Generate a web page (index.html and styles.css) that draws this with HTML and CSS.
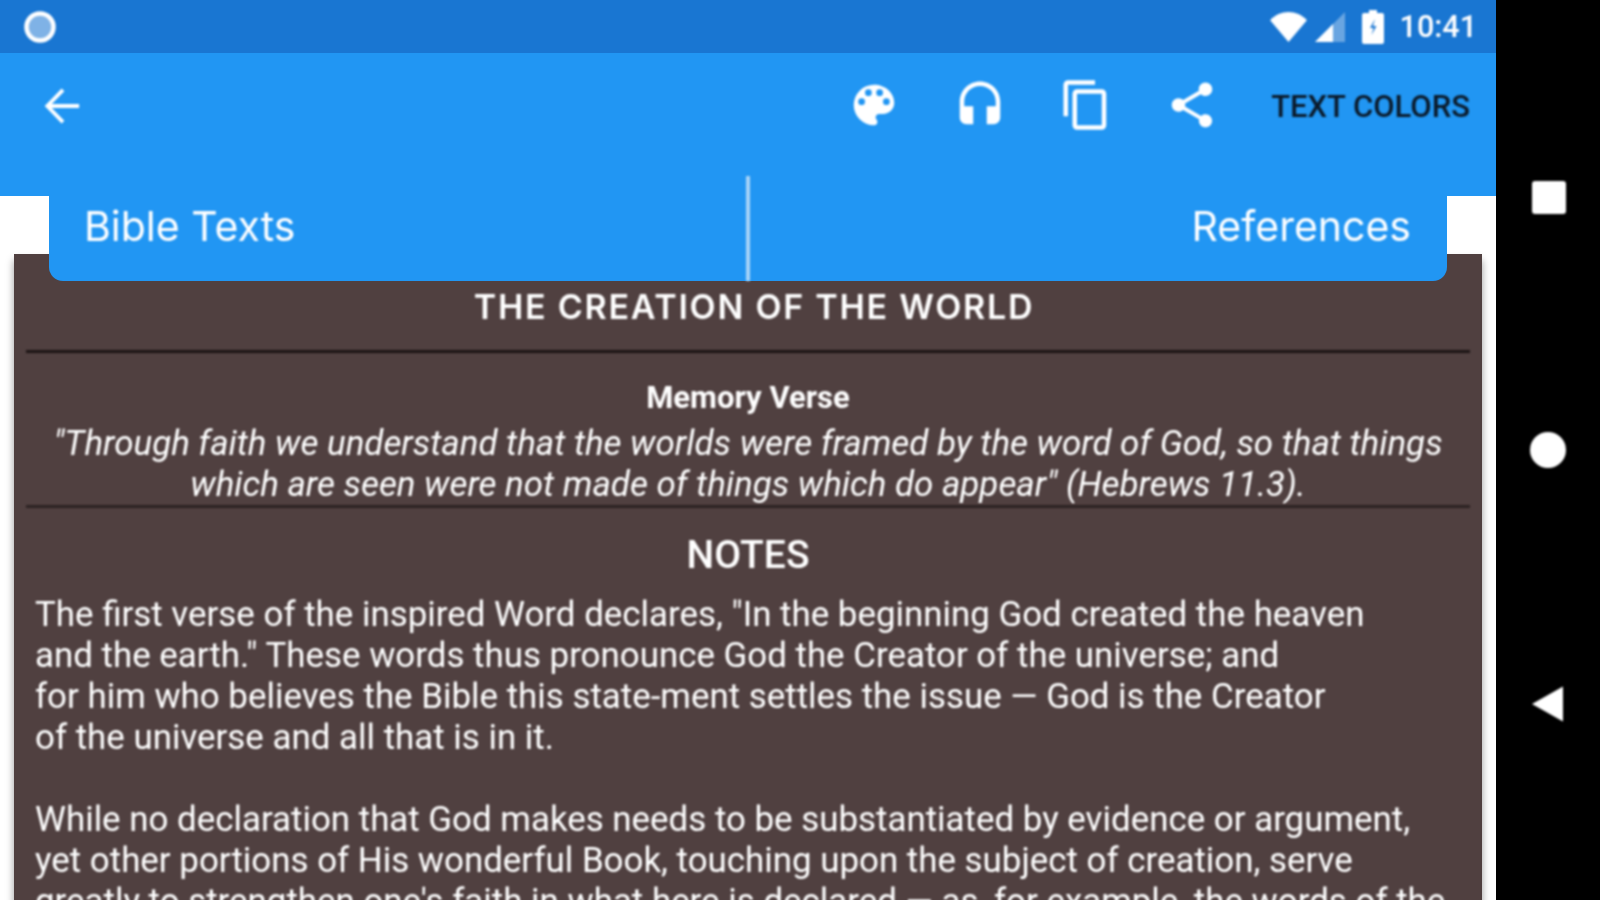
FILE: index.html
```html
<!DOCTYPE html>
<html lang="en">
<head>
<meta charset="utf-8">
<title>The Creation of the World</title>
<link rel="stylesheet" href="styles.css">
</head>
<body>
<div class="device">
  <main class="screen">
    <header class="status">
      <svg class="ic-notify" viewBox="0 0 34 34"><circle cx="17" cy="17" r="13.5" fill="#7fb2e6" stroke="#fff" stroke-width="4.5"/></svg>
      <div class="status-right">
        <svg class="ic-wifi" viewBox="0 0 40 32"><path d="M1 9.500C6 4 13 1 20 1s14 3 19 8.500L20 32z" fill="#fff"/></svg>
        <svg class="ic-signal" viewBox="0 0 32 32"><path d="M31 1v30H1z" fill="#fff" opacity=".35"/><path d="M19 13v18H1z" fill="#fff"/></svg>
        <svg class="ic-batt" viewBox="0 0 22 34"><path d="M7 0h8v3h5a2 2 0 0 1 2 2v27a2 2 0 0 1-2 2H2a2 2 0 0 1-2-2V5a2 2 0 0 1 2-2h5z" fill="#fff"/><path d="M13 9l-5 9h3.500l-2 7 5-9h-3.500z" fill="#1976d2"/></svg>
        <span class="clock">10:41</span>
      </div>
    </header>
    <nav class="appbar">
      <svg class="ic-back" viewBox="0 0 40 40"><path d="M37 20H5M20 3L3.500 20 20 37" fill="none" stroke="#fff" stroke-width="4"/></svg>
      <div class="actions">
        <svg class="ic-act" viewBox="0 0 24 24"><path fill="#fff" d="M12 3a9 9 0 0 0 0 18c.83 0 1.500-.67 1.500-1.500 0-.39-.15-.74-.39-1.010-.23-.26-.38-.61-.38-.99 0-.83.67-1.500 1.500-1.500H16c2.760 0 5-2.240 5-5 0-4.420-4.030-8-9-8zm-5.500 9a1.500 1.500 0 1 1 0-3 1.500 1.500 0 0 1 0 3zm3-4a1.500 1.500 0 1 1 0-3 1.500 1.500 0 0 1 0 3zm5 0a1.500 1.500 0 1 1 0-3 1.500 1.500 0 0 1 0 3zm3 4a1.500 1.500 0 1 1 0-3 1.500 1.500 0 0 1 0 3z"/></svg>
        <svg class="ic-act" viewBox="0 0 24 24"><path fill="#fff" d="M12 1.500c-4.970 0-9 4.030-9 9v7c0 1.660 1.340 3 3 3h3v-8H5v-2c0-3.870 3.130-7 7-7s7 3.130 7 7v2h-4v8h3c1.660 0 3-1.340 3-3v-7c0-4.970-4.030-9-9-9z"/></svg>
        <svg class="ic-act" viewBox="0 0 24 24"><path fill="#fff" d="M16 1H4c-1.100 0-2 .9-2 2v14h2V3h12V1zm3 4H8c-1.100 0-2 .9-2 2v14c0 1.100.9 2 2 2h11c1.100 0 2-.9 2-2V7c0-1.100-.9-2-2-2zm0 16H8V7h11v14z"/></svg>
        <svg class="ic-act" viewBox="0 0 24 24"><path fill="#fff" d="M18 16.080c-.76 0-1.440.3-1.960.77L8.910 12.700c.05-.23.09-.46.09-.7s-.04-.47-.09-.7l7.050-4.110c.54.5 1.250.81 2.040.81 1.660 0 3-1.340 3-3s-1.340-3-3-3-3 1.340-3 3c0 .24.04.47.09.7L8.040 9.810C7.500 9.310 6.790 9 6 9c-1.660 0-3 1.340-3 3s1.340 3 3 3c.79 0 1.500-.31 2.040-.81l7.120 4.160c-.05.21-.08.43-.08.65 0 1.610 1.310 2.920 2.920 2.920s2.920-1.310 2.920-2.920-1.310-2.920-2.920-2.920z"/></svg>
        <span class="text-colors">TEXT COLORS</span>
      </div>
    </nav>
    <section class="sheet">
      <article class="card">
        <h1 class="title">THE CREATION OF THE WORLD</h1>
        <div class="rule"></div>
        <div class="verse-head">Memory Verse</div>
        <p class="verse">"Through faith we understand that the worlds were framed by the word of God, so that things<br>which are seen were not made of things which do appear" (Hebrews 11.3).</p>
        <div class="rule rule-thick"></div>
        <h2 class="notes">NOTES</h2>
        <p class="para">The first verse of the inspired Word declares, "In the beginning God created the heaven<br>and the earth." These words thus pronounce God the Creator of the universe; and<br>for him who believes the Bible this state-ment settles the issue — God is the Creator<br>of the universe and all that is in it.</p>
        <p class="para">While no declaration that God makes needs to be substantiated by evidence or argument,<br>yet other portions of His wonderful Book, touching upon the subject of creation, serve<br>greatly to strengthen one's faith in what here is declared — as, for example, the words of the</p>
      </article>
      <div class="tabs">
        <div class="tab">Bible Texts</div>
        <div class="tab tab-right">References</div>
      </div>
    </section>
  </main>
  <aside class="navbar">
    <div class="nav-square"></div>
    <div class="nav-circle"></div>
    <svg class="nav-back" viewBox="0 0 34 38"><path d="M33 1v36L1 19z" fill="#fff"/></svg>
  </aside>
</div>
</body>
</html>
```

FILE: styles.css
```css
* { box-sizing: border-box; }
html, body { margin: 0; height: 100%; overflow: hidden; background: #000; }
.device {
  display: flex;
  width: 1600px;
  height: 900px;
  font-family: Roboto, "Liberation Sans", sans-serif;
}
.status > *, .appbar > *, .card > *, .tab, .navbar > * { filter: blur(0.8px); }
.screen {
  width: 1496px;
  height: 900px;
  display: flex;
  flex-direction: column;
  overflow: hidden;
}
.status {
  height: 53px;
  flex: none;
  background: #1976d2;
  display: flex;
  align-items: center;
  justify-content: space-between;
  padding: 0 19px 0 23px;
  color: #fff;
}
.ic-notify { width: 34px; height: 34px; }
.status-right { display: flex; align-items: center; }
.ic-wifi { width: 39px; height: 31px; margin-right: 6px; }
.ic-signal { width: 32px; height: 32px; margin-right: 16px; }
.ic-batt { width: 22px; height: 34px; margin-right: 16px; }
.clock { font-size: 30.500px; font-weight: 500; line-height: 34px; }
.appbar {
  height: 143px;
  flex: none;
  background: #2196f3;
  display: flex;
  justify-content: space-between;
  align-items: flex-start;
  padding: 0 26px 0 44px;
}
.ic-back { width: 38px; height: 38px; margin-top: 34px; }
.actions { display: flex; align-items: center; height: 105px; }
.ic-act { width: 54px; height: 54px; margin-right: 52px; margin-top: -2px; }
.text-colors {
  font-size: 31px;
  font-weight: 500;
  color: #0b1a2a;
  margin-top: 1px;
}
.sheet {
  position: relative;
  flex: 1;
  background: #fff;
  padding: 58px 14px 0;
}
.card {
  background: #504040;
  height: 100%;
  color: #fff;
  padding: 0 12px;
  box-shadow: 0 6px 8px rgba(0, 0, 0, .4);
}
.title {
  margin: 0;
  padding-top: 32px;
  font-family: Inter, sans-serif;
  font-size: 34px;
  font-weight: 600;
  letter-spacing: 1.750px;
  line-height: 42px;
  text-align: center;
  padding-left: 12px;
}
.rule { height: 3px; background: #1c1414; margin-top: 22px; }
.rule-thick { margin-top: 0; background: #2c2222; }
.verse-head {
  margin-top: 25px;
  text-align: center;
  font-size: 31px;
  font-weight: 700;
  line-height: 40px;
}
.verse {
  margin: 5px 0 0;
  text-align: center;
  font-size: 34.900px;
  font-style: italic;
  line-height: 41px;
}
.notes {
  margin: 25px 0 0;
  text-align: center;
  font-size: 39px;
  font-weight: 500;
  line-height: 44px;
}
.para {
  margin: 17px 0 41px;
  padding-left: 9px;
  font-size: 34.880px;
  line-height: 41px;
  white-space: nowrap;
}
.tabs {
  position: absolute;
  left: 49px;
  top: 0;
  width: 1398px;
  height: 85px;
  background: #2196f3;
  border-radius: 0 0 14px 14px;
  display: flex;
  color: #fff;
  font-family: Inter, sans-serif;
  font-size: 41px;
  line-height: 60px;
}
.tab { flex: 1; padding: 0 36px 0 35px; position: relative; }
.tab-right { text-align: right; border-left: 4px solid #a8d4f8; height: 105px; margin-top: -20px; line-height: 100px; }
.navbar {
  width: 104px;
  background: #000;
  display: block;
  position: relative;
}
.nav-square {
  position: absolute;
  left: 36px;
  top: 181px;
  width: 34px;
  height: 33px;
  border-radius: 3px;
  background: #fff;
}
.nav-circle {
  position: absolute;
  left: 34px;
  top: 432px;
  width: 36px;
  height: 36px;
  border-radius: 50%;
  background: #fff;
}
.nav-back { position: absolute; left: 35px; top: 685px; width: 33px; height: 38px; }
```
